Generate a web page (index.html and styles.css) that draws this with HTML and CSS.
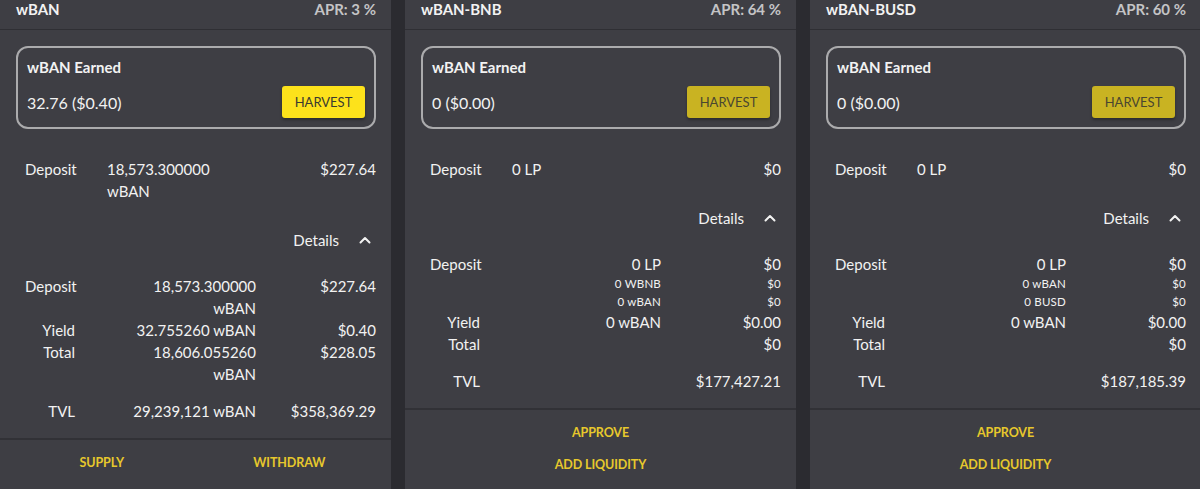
FILE: index.html
```html
<!DOCTYPE html>
<html lang="en">
<head>
<meta charset="utf-8">
<title>Farms</title>
<link rel="stylesheet" href="styles.css">
</head>
<body>
<main class="farms">

  <section class="farm">
    <header class="farm-head">
      <span class="farm-name">wBAN</span>
      <span class="farm-apr">APR: 3 %</span>
    </header>
    <div class="farm-body">
      <div class="earned">
        <div class="earned-title">wBAN Earned</div>
        <div class="earned-row">
          <span class="earned-value">32.76 ($0.40)</span>
          <button class="harvest">HARVEST</button>
        </div>
      </div>
      <div class="deposit">
        <span class="deposit-label">Deposit</span>
        <span class="deposit-amount">18,573.300000 wBAN</span>
        <span class="deposit-usd">$227.64</span>
      </div>
      <div class="details-toggle">
        <span>Details</span>
        <svg class="chevron" width="12" height="8" viewBox="0 0 12 8"><path d="M1.5 6.5 6 2l4.5 4.5" fill="none" stroke="#f2f2f2" stroke-width="2" stroke-linecap="round" stroke-linejoin="round"/></svg>
      </div>
      <div class="details">
        <span class="d-label">Deposit</span><span class="d-amount">18,573.300000 wBAN</span><span class="d-usd">$227.64</span>
        <span class="d-label">Yield</span><span class="d-amount">32.755260 wBAN</span><span class="d-usd">$0.40</span>
        <span class="d-label">Total</span><span class="d-amount">18,606.055260 wBAN</span><span class="d-usd">$228.05</span>
        <span class="d-label tvl">TVL</span><span class="d-amount tvl">29,239,121 wBAN</span><span class="d-usd tvl">$358,369.29</span>
      </div>
    </div>
    <footer class="farm-actions split">
      <button class="action">SUPPLY</button>
      <button class="action">WITHDRAW</button>
    </footer>
  </section>

  <section class="farm">
    <header class="farm-head">
      <span class="farm-name">wBAN-BNB</span>
      <span class="farm-apr">APR: 64 %</span>
    </header>
    <div class="farm-body">
      <div class="earned">
        <div class="earned-title">wBAN Earned</div>
        <div class="earned-row">
          <span class="earned-value">0 ($0.00)</span>
          <button class="harvest" disabled>HARVEST</button>
        </div>
      </div>
      <div class="deposit">
        <span class="deposit-label">Deposit</span>
        <span class="deposit-amount">0 LP</span>
        <span class="deposit-usd">$0</span>
      </div>
      <div class="details-toggle">
        <span>Details</span>
        <svg class="chevron" width="12" height="8" viewBox="0 0 12 8"><path d="M1.5 6.5 6 2l4.5 4.5" fill="none" stroke="#f2f2f2" stroke-width="2" stroke-linecap="round" stroke-linejoin="round"/></svg>
      </div>
      <div class="details">
        <span class="d-label">Deposit</span><span class="d-amount">0 LP</span><span class="d-usd">$0</span>
        <span class="d-label"></span><span class="d-amount small">0 WBNB</span><span class="d-usd small">$0</span>
        <span class="d-label"></span><span class="d-amount small">0 wBAN</span><span class="d-usd small">$0</span>
        <span class="d-label">Yield</span><span class="d-amount">0 wBAN</span><span class="d-usd">$0.00</span>
        <span class="d-label">Total</span><span class="d-amount"></span><span class="d-usd">$0</span>
        <span class="d-label tvl">TVL</span><span class="d-amount tvl"></span><span class="d-usd tvl">$177,427.21</span>
      </div>
    </div>
    <footer class="farm-actions stacked">
      <button class="action">APPROVE</button>
      <button class="action">ADD LIQUIDITY</button>
    </footer>
  </section>

  <section class="farm">
    <header class="farm-head">
      <span class="farm-name">wBAN-BUSD</span>
      <span class="farm-apr">APR: 60 %</span>
    </header>
    <div class="farm-body">
      <div class="earned">
        <div class="earned-title">wBAN Earned</div>
        <div class="earned-row">
          <span class="earned-value">0 ($0.00)</span>
          <button class="harvest" disabled>HARVEST</button>
        </div>
      </div>
      <div class="deposit">
        <span class="deposit-label">Deposit</span>
        <span class="deposit-amount">0 LP</span>
        <span class="deposit-usd">$0</span>
      </div>
      <div class="details-toggle">
        <span>Details</span>
        <svg class="chevron" width="12" height="8" viewBox="0 0 12 8"><path d="M1.5 6.5 6 2l4.5 4.5" fill="none" stroke="#f2f2f2" stroke-width="2" stroke-linecap="round" stroke-linejoin="round"/></svg>
      </div>
      <div class="details">
        <span class="d-label">Deposit</span><span class="d-amount">0 LP</span><span class="d-usd">$0</span>
        <span class="d-label"></span><span class="d-amount small">0 wBAN</span><span class="d-usd small">$0</span>
        <span class="d-label"></span><span class="d-amount small">0 BUSD</span><span class="d-usd small">$0</span>
        <span class="d-label">Yield</span><span class="d-amount">0 wBAN</span><span class="d-usd">$0.00</span>
        <span class="d-label">Total</span><span class="d-amount"></span><span class="d-usd">$0</span>
        <span class="d-label tvl">TVL</span><span class="d-amount tvl"></span><span class="d-usd tvl">$187,185.39</span>
      </div>
    </div>
    <footer class="farm-actions stacked">
      <button class="action">APPROVE</button>
      <button class="action">ADD LIQUIDITY</button>
    </footer>
  </section>

</main>
</body>
</html>
```

FILE: styles.css
```css
html, body {
  margin: 0;
  height: 100%;
  overflow: hidden;
}

body {
  background: #2b2b30;
  color: #f2f2f2;
  font-family: "Lato", "Noto Sans", sans-serif;
  font-size: 15px;
}

.farms {
  display: flex;
  gap: 14px;
  height: 100%;
}

.farm {
  flex: 0 0 391px;
  display: flex;
  flex-direction: column;
  background: #3e3e44;
}

/* title bar */
.farm-head {
  display: flex;
  justify-content: space-between;
  align-items: center;
  padding: 0 15px 11px 16px;
  line-height: 18px;
  font-weight: 700;
  border-bottom: 1px solid #2f2f34;
}

.farm-apr {
  color: #c4c4c6;
}

.farm-body {
  padding: 0 15px 0 16px;
}

/* earned box */
.earned {
  margin-top: 16px;
  border: 2px solid #ababad;
  border-radius: 12px;
  padding: 10px 9px 9px 9px;
}

.earned-title {
  font-weight: 700;
  line-height: 18px;
}

.earned-row {
  display: flex;
  justify-content: space-between;
  align-items: center;
  margin-top: 10px;
  font-size: 16px;
}

.harvest {
  width: 83px;
  height: 32px;
  border: 0;
  border-radius: 3px;
  background: #fde21b;
  color: #3a3a30;
  font-family: inherit;
  font-size: 13px;
  box-shadow: 0 2px 3px rgba(0, 0, 0, 0.3);
}

.harvest:disabled {
  background: #c9b322;
  color: #4a4630;
}

/* deposit summary */
.deposit {
  display: grid;
  grid-template-columns: 82px 130px 1fr;
  margin-top: 29px;
  padding-left: 9px;
  line-height: 22px;
}

.deposit-usd {
  text-align: right;
}

.details-toggle {
  display: flex;
  justify-content: flex-end;
  align-items: center;
  gap: 20px;
  margin-top: 27px;
  padding-right: 5px;
  line-height: 22px;
}

.chevron {
  display: block;
}

/* details table */
.details {
  display: grid;
  grid-template-columns: 50px 181px 1fr;
  margin-top: 24px;
  padding-left: 9px;
  line-height: 22px;
}

.d-label {
  text-align: right;
  white-space: nowrap;
}

.d-amount {
  padding-left: 51px;
  text-align: right;
}

.d-usd {
  text-align: right;
}

.details .small {
  font-size: 11.5px;
  line-height: 18px;
  letter-spacing: 0.2px;
}

.details .tvl {
  margin-top: 15px;
}

/* actions */
.farm-actions {
  margin-top: 16px;
  border-top: 2px solid #313136;
  padding-top: 6px;
}

.farm-actions.split {
  display: flex;
  padding-left: 8px;
  padding-right: 8px;
}

.farm-actions.split .action {
  flex: 1;
}

.farm-actions.stacked {
  display: flex;
  flex-direction: column;
  align-items: center;
}

.action {
  height: 32px;
  padding: 0 8px;
  border: 0;
  background: none;
  color: #e7c82c;
  font-family: inherit;
  font-size: 12.5px;
  font-weight: 700;
  letter-spacing: -0.1px;
}
```
